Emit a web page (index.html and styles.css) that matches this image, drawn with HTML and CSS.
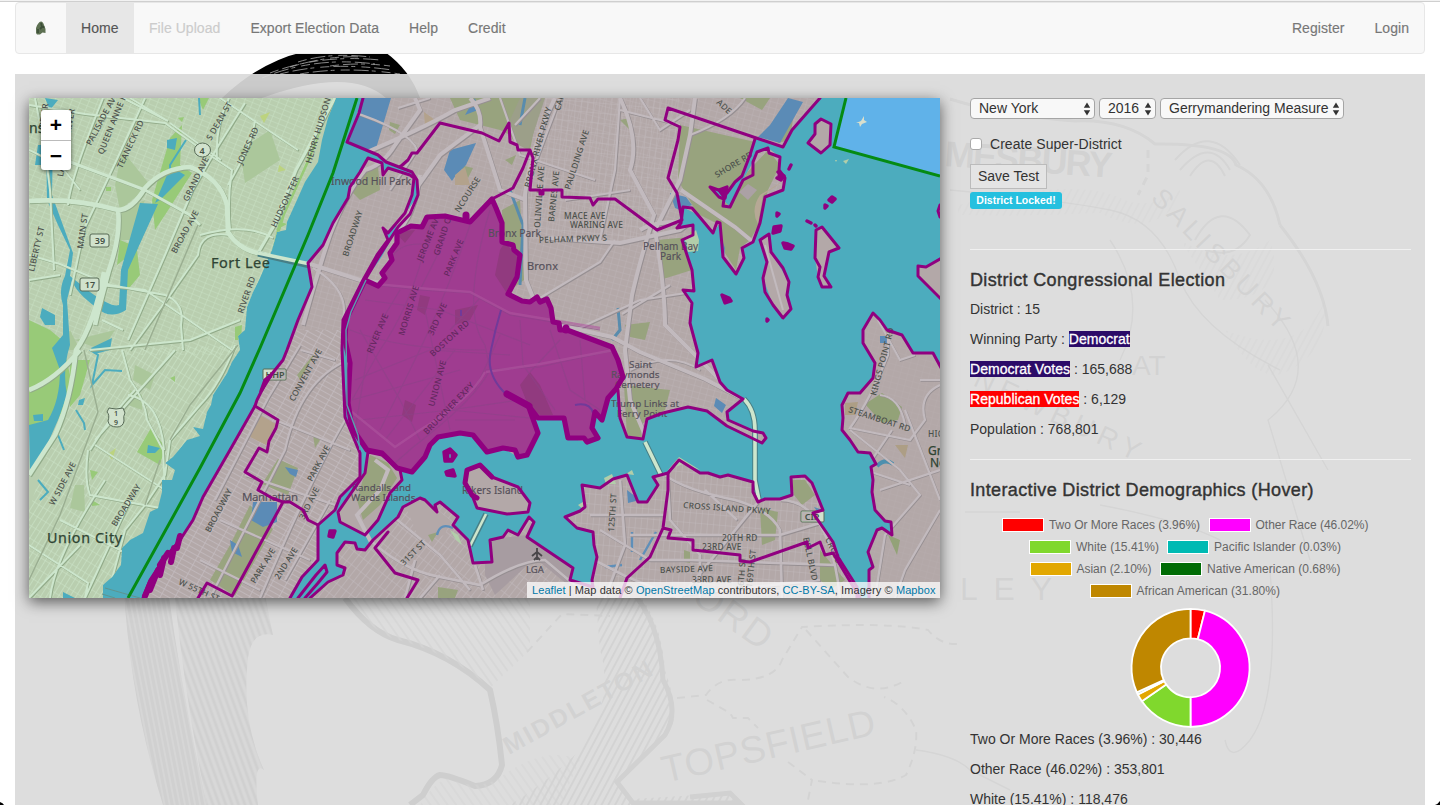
FILE: index.html
```html
<!DOCTYPE html>
<html lang="en">
<head>
<meta charset="utf-8">
<title>District Map</title>
<link rel="stylesheet" href="styles.css">
</head>
<body>
<svg class="backdrop" viewBox="0 0 1440 805" aria-hidden="true">
  <defs>
    <pattern id="hatchA" width="5" height="60" patternUnits="userSpaceOnUse" patternTransform="rotate(-11)"><rect width="5" height="60" fill="#444"/><path d="M3 0V60" stroke="#bbb" stroke-width="1.4"/></pattern>
    <pattern id="hatchB" width="6" height="60" patternUnits="userSpaceOnUse" patternTransform="rotate(-20)"><rect width="6" height="60" fill="#bbb"/><path d="M3 0V60" stroke="#444" stroke-width="2.8"/></pattern>
    <pattern id="hatchC" width="6" height="40" patternUnits="userSpaceOnUse" patternTransform="rotate(28)"><path d="M3 0V40" stroke="#777" stroke-width="2"/></pattern>
    <pattern id="hatchD" width="7" height="60" patternUnits="userSpaceOnUse" patternTransform="rotate(-35)"><path d="M3 0V60" stroke="#888" stroke-width="1.4"/></pattern>
  </defs>
  <path d="M222 98Q260 62 303 52H385Q410 70 420 98H386Q350 66 262 98Z" fill="#000"/>
  <path d="M262 78Q315 56 375 64M270 73Q320 54 380 60M280 74Q330 61 392 70M298 62Q330 52 370 57M300 74Q345 66 400 74M290 67Q330 55 360 57M330 66Q360 62 390 66" fill="none" stroke="#aaa" stroke-width=".8" stroke-dasharray="9 4 15 3 4 6"/>
  <path d="M124 590H168Q183 700 207 805H163Q130 700 124 590Z" fill="url(#hatchA)"/>
  <path d="M174 590H264L273 635Q252 630 248 658Q241 720 264 770Q253 760 258 805H207Q185 700 174 590Z" fill="url(#hatchB)"/>
  <path d="M345 598Q370 632 398 640Q450 653 490 690Q498 725 502 765Q497 785 475 786Q448 775 440 775Q432 777 423 795L410 805" fill="none" stroke="#333" stroke-width="6"/>
  <path d="M350 598Q370 632 398 640Q450 653 490 688L530 650V598Z" fill="url(#hatchD)"/>
  <path d="M423 800Q440 777 450 779Q480 792 502 776Q545 745 580 760L560 805H420Z" fill="url(#hatchD)" opacity=".8"/>
  <path d="M595 590H635Q662 620 665 670Q679 710 672 726Q650 755 617 778L632 799L730 793L740 805H510Q550 780 580 750Q615 700 600 650Z" fill="url(#hatchC)"/>
  <path d="M630 590Q660 620 663 680Q680 710 665 735L617 782L633 803H740L730 793L690 797" fill="none" stroke="#555" stroke-width="5"/>
  <g fill="none" stroke="#777" stroke-width="2" stroke-dasharray="8 6"><path d="M527 652L562 614L610 616M677 698L706 695Q718 678 738 680Q775 680 782 660L802 627Q890 622 928 630Q940 645 958 644M806 630L848 677Q875 698 904 681M707 700L730 713L733 718H748L758 728M788 762L812 780L807 805M818 781Q880 790 906 775Q918 750 916 730Q905 705 884 697"/></g>
  <g fill="none" stroke="#888" stroke-width="3"><path d="M950 99Q1000 115 1075 121Q1125 119 1155 144Q1230 143 1236 165Q1270 180 1280 225M1280 225Q1324 280 1328 326"/><path d="M950 190Q1060 200 1110 210Q1160 220 1180 280Q1200 330 1280 370M1110 240Q1150 300 1120 360M1268 365L1328 470M1265 300Q1330 370 1268 420L1310 560M1270 570Q1280 700 1250 740Q1230 765 1225 740M965 512H1020M1100 505Q1180 520 1220 540M970 770L1010 790M916 750Q955 755 970 770" stroke-width="1.4"/><path d="M1175 160Q1210 120 1240 165M1180 170Q1210 135 1230 170M1190 176Q1210 145 1225 176M1195 240Q1220 195 1250 235Q1235 260 1205 250" stroke-width="2"/><path d="M1148 150V175L1138 195" stroke-dasharray="8 6"/></g>
  <path d="M958 205Q1080 175 1125 200Q1150 210 1180 190V200Q1150 240 1100 213Q1030 217 958 215Z" fill="url(#hatchC)" opacity=".3"/>
  <path d="M1225 330Q1260 390 1290 370Q1330 350 1325 300Q1300 360 1225 330ZM1180 240Q1230 270 1270 240Q1290 300 1220 300Z" fill="url(#hatchC)" opacity=".35"/>
  <g class="engraving"><text x="509" y="755" font-size="25" font-weight="700" transform="rotate(-29 509 755)" textLength="166">MIDDLETON</text><text x="665" y="783" font-size="38" transform="rotate(-13 665 783)" textLength="218">TOPSFIELD</text><text x="690" y="600" font-size="38" transform="rotate(36 690 600)" textLength="88">ORD</text><text x="944" y="166" font-size="36" font-weight="700" transform="rotate(4 944 166)" textLength="168">MESBURY</text><text x="1150" y="199" font-size="27" transform="rotate(46 1150 199)" textLength="185">SALISBURY</text><text x="1132" y="375" font-size="28">AT</text><text x="972" y="385" font-size="28" transform="rotate(25 972 385)" textLength="180">NEWBURY</text><text x="960" y="600" font-size="32" textLength="92">LEY</text></g>
  <path d="M0 802Q3 803 4 805H0ZM1440 801Q1438 804 1435 805H1440Z"/>
</svg>
<div class="page">
  <nav class="navbar">
    <a class="brand"><svg width="14" height="16" viewBox="0 0 14 16"><path d="M7 1.500Q9 1.500 10 5L11.500 9V13L8.500 12.500L6 14.500H3L2 13V8Q4 2 7 1.500Z" fill="#5d7052"/><path d="M7 3L8 7L6 9M4 9V13M9.500 6V8" fill="none" stroke="#30412d" stroke-width="1.800" opacity=".7"/></svg></a>
    <a class="nav-item active">Home</a><a class="nav-item disabled">File Upload</a><a class="nav-item">Export Election Data</a><a class="nav-item">Help</a><a class="nav-item">Credit</a>
    <span class="spacer"></span>
    <a class="nav-item">Register</a><a class="nav-item">Login</a>
  </nav>
  <main class="panel">
    <section class="map">
      <svg class="map-canvas" viewBox="29 98 911 500">
        <defs>
          <pattern id="gw" width="8" height="5" patternUnits="userSpaceOnUse" patternTransform="rotate(22)"><path d="M0 0H8M0 0V5" stroke="#c8e0c3" stroke-width="1.1" fill="none"/></pattern>
          <pattern id="gw2" width="5" height="11" patternUnits="userSpaceOnUse" patternTransform="rotate(32)"><path d="M0 0H5M0 0V11" stroke="#cce4c8" stroke-width="1.2" fill="none"/></pattern>
          <pattern id="gm" width="13" height="5" patternUnits="userSpaceOnUse" patternTransform="rotate(29)"><path d="M0 0H13M0 0V5" stroke="#c3bbc0" stroke-width="1.5" fill="none"/></pattern>
          <pattern id="gb" width="7" height="6" patternUnits="userSpaceOnUse" patternTransform="rotate(15)"><path d="M0 0H7M0 0V6" stroke="#bdb4b7" stroke-width=".9" fill="none"/></pattern>
          <pattern id="gq" width="6" height="10" patternUnits="userSpaceOnUse" patternTransform="rotate(5)"><path d="M0 0H6M0 0V10" stroke="#bfb7ba" stroke-width="1" fill="none"/></pattern>
          <pattern id="gq2" width="6" height="12" patternUnits="userSpaceOnUse" patternTransform="rotate(38)"><path d="M0 0H6M0 0V12" stroke="#c1b9bd" stroke-width="1.2" fill="none"/></pattern>
          <path id="jersey" d="M29 98H336L328 118L322 140L318 162L305 182L297 200L287 222L286 230L277 232L272 250L260 278L253 292L247 307L245 330L238 336L240 350L232 362L227 373L213 395L211 405L207 412L203 429L193 427L200 436L187 440L173 457L165 463L175 470L172 480L162 480V492L158 508L150 512L143 533L130 540L122 548L121 565L112 577L103 585V598H29Z"/>
          <path id="manhattan" d="M368 158L360 172L350 187L348 198L333 223L323 245L308 263L312 287L298 320L287 350L283 360L267 380L263 388L257 400L255 406L230 450L203 497L193 520L180 540L163 560L150 580L143 598V605H290V598L302 577L318 560L318 525L335 510L340 497L360 477V453L345 417L342 350L343 320L363 280L377 255L388 240L383 228L388 233L405 213L412 195L414 178L410 175L388 168L383 175L382 163Z"/>
          <path id="bronx" d="M363 98L347 142L378 155L386 162L412 172L418 180L417 198L398 222L392 238L381 258L365 280L347 318L345 340L352 428L367 450L382 453L397 468L412 472L425 457L438 437L460 433L473 435L487 452L503 448L518 457L527 455L538 433L528 405L538 418L564 418L568 438L587 442L598 438L592 428L595 412L602 420L608 398L617 388L620 418L627 437L643 439L647 419L663 413L688 407L707 411L727 426L762 443L766 438L763 433L753 431L728 420L727 412L743 399L727 390L720 382L712 360L696 367L698 353L690 323L692 303L683 290L694 291L692 270L682 240L692 235L693 225L677 228L683 207L698 215L713 233L720 223L723 257L736 274L744 258L742 248L753 242L760 223L765 197L783 190L785 178L779 170L780 157L768 148L757 152L753 162L743 180L730 207L710 187L725 192L742 177L755 139L783 147L792 130L820 98Z"/>
          <path id="selected" d="M492 199L496 208L502 223L502 242L513 245L514 250L520 255L517 277L508 294L522 301L530 302L537 297L540 302L547 299L551 308L553 322L559 323L560 330L567 330L612 347L618 360L623 377L616 389L608 398L602 420L595 412L592 428L598 438L587 442L584 438L568 438L564 418H538L528 405L507 395L528 405L538 433L527 455L518 457L515 450L503 448L487 452L473 435L460 433L438 437L430 445L425 457L412 472L397 468L382 453L367 450L352 428L348 403L350 363L345 340L346 320L365 280L378 286L385 278L382 273L392 260L390 253L397 243V233L411 226L422 227L427 217L445 216L470 222Z"/>
          <path id="queens" d="M310 605V598L328 582L343 575L345 568L337 565V553L345 542L355 543L357 549L365 550L373 540L398 517L403 507L420 498L425 500L437 512L435 505L440 502L458 517L453 525L468 540L473 563L492 562L490 540L503 537L508 530L518 535L529 517L534 522L527 537L573 568L570 580L593 587L592 580L597 557L594 545L593 532L577 528L565 517L580 511L585 507L582 485L600 488L613 479L627 475L638 502H647L658 485L653 477L668 473L679 460L700 473L708 473L720 477L728 475L753 482V492L758 502L765 499H780L792 495L791 477L805 476L812 483L823 510L813 513L833 542L838 557L857 587V605Z"/>
          <path id="neck" d="M869 605V570L873 567L868 552L877 530L882 528L892 535L891 522L885 521L875 510L872 492L873 480L871 467L876 464L870 453L858 452L850 440L842 430L843 418L842 405L848 393L860 393L873 378L875 363L863 343V330L873 313L880 320L887 330L902 335L913 353L933 353L945 375V605Z"/>
          <path id="rikers" d="M467 470L480 465L492 477L518 487L530 503L528 512L507 514L477 508L472 495L465 483Z"/>
          <path id="randalls" d="M368 452L365 473L338 512L340 522L365 535L378 520L390 493L402 480L400 470L382 455Z"/>
          <clipPath id="cj"><use href="#jersey"/></clipPath><clipPath id="cm"><use href="#manhattan"/></clipPath><clipPath id="cb"><use href="#bronx"/></clipPath><clipPath id="cq"><use href="#queens"/></clipPath><clipPath id="cn"><use href="#neck"/></clipPath>
          <g id="jr">
            <path d="M29 201Q75 198 118 210Q132 210 145 188Q163 168 190 167Q220 178 227 205L228 232Q238 249 258 253L308 264M118 210Q121 235 109 270Q97 315 95 325M104 272Q94 325 76 350Q71 400 55 435L29 475M80 350Q55 380 29 390" stroke-width="4.6"/>
            <path d="M145 190L124 182L70 162M145 190L190 215L200 225M258 253L275 224L296 170L335 98" stroke-width="3"/>
            <path d="M29 105L85 114L165 123L205 152L232 170Q227 200 230 230M123 98L168 121L130 98M170 123L221 160M220 98L298 150M245 103Q218 145 193 189L165 255L128 340M145 98Q117 160 84 229L70 295M103 98Q70 180 68 205M35 98L45 150L50 190L54 270M200 235Q245 222 273 238M230 235Q200 230 198 255L170 295L130 350M29 255L60 264L110 285L165 295Q185 303 181 325L183 350M29 280L60 275M100 285L145 290L232 350M229 98Q215 125 217 160M255 120Q252 145 228 185M29 150L60 165L80 190M102 320L123 330M122 350L130 380Q145 400 147 420L163 450L165 490M90 450Q115 410 135 390M235 345Q220 385 200 405L170 440L165 475L145 505L125 530L107 598M95 445L165 490M128 395Q160 400 164 450M60 520L140 560M29 545L88 583L85 598M90 350L190 340L240 320M88 450Q84 480 90 495L160 508M95 440L175 350M50 598Q55 555 105 480M85 598L130 500M29 598L80 545" stroke-width="2"/>
          </g>
          <g id="er">
            <path d="M415 98L420 110L395 145Q383 165 365 170Q345 195 330 235Q315 280 303 325M310 264L360 280L420 288L470 293L535 320L612 337L640 352L705 379L743 399M555 98Q530 150 525 195L526 280L550 340M470 98Q482 110 480 127L500 190L526 200M420 175Q415 215 395 235M620 98Q640 140 630 170L654 215Q640 260 632 295L625 350L630 400L660 470M360 155Q420 130 455 110L490 98M480 125L440 155L415 190M548 238L620 243L680 230L693 220M695 98L690 135L680 180L655 230Q665 290 665 325L720 380M681 190L735 227L753 242M640 230Q655 220 693 222" stroke-width="4"/>
            <path d="M345 98L347 110Q410 130 417 150L390 190M540 98L515 125M500 98L520 155L595 180M565 200L630 190M670 285L622 314M560 98L525 190M640 98L660 130L690 110M690 135Q730 120 745 98M620 110L680 125M600 240L615 170L620 98M540 298L600 262L615 240M575 330L640 300L686 293M630 370Q670 350 700 370M348 360Q300 380 285 450L210 598M300 345L268 398L215 500M345 420Q310 480 260 598M330 500L285 580M275 420L350 450M245 475L335 505M220 520L310 560M200 560L260 590M301 350L335 360M313 268Q350 290 343 320M398 108L430 98" stroke-width="2.2"/>
            <path d="M365 535Q400 570 440 577L480 585Q520 560 545 560L590 598M395 518L440 555L470 590M415 560L405 598M594 560L627 577L680 598M665 475Q685 490 735 500Q770 510 780 530L782 598M668 480L670 520L700 555V598M705 490L737 520M758 502L680 598M780 500Q830 500 840 598M590 515L665 515M620 480L625 545L605 598M600 530L650 560L690 560L835 565M630 535H780L830 520M820 580L650 598M440 575L420 598M483 590L475 565" stroke-width="2.6"/>
            <path d="M940 385Q918 395 925 420L910 440L850 428Q870 400 888 355V325M880 395Q900 397 905 425M905 410L940 500M850 430L900 470L920 495L885 535L875 598M940 470L880 490M940 510L905 570L895 598M892 430L865 470L910 485M920 380L940 380M878 320L900 360L915 355" stroke-width="2.2"/>
          </g>
        </defs>
        <rect x="29" y="98" width="911" height="500" fill="#4cacbe"/>
        <use href="#jersey" fill="#b9ceaf"/>
        <g clip-path="url(#cj)">
          <path d="M29 98H335L240 350L230 355H29Z" fill="url(#gw)"/><path d="M80 350L250 345L100 598H29V510Z" fill="url(#gw2)"/>
          <g fill="#abc79b"><path d="M122 150L150 185L120 210L115 185ZM240 150L270 130L280 160L245 183ZM135 365L155 375L150 390L133 380ZM75 485H84L85 512L70 508ZM75 340L115 330L102 350ZM130 390L142 395V410L128 405ZM122 210L145 200L130 240H118ZM60 350H80L70 330Z"/></g>
          <g fill="#98ca78"><path d="M170 138L182 125L180 165L192 173L165 215L155 230L152 200ZM120 240L139 248L117 265ZM130 250H137L140 275L125 293ZM29 320L50 330L62 340L70 375L68 400L55 425H29ZM70 360H90L80 395L70 407ZM151 428L165 447L160 465L137 452ZM198 98H209L203 110ZM325 120L310 160L285 215L282 225L270 260L278 225ZM235 327L242 325L241 340H235ZM281 222L287 224L276 230ZM178 118L184 117L182 122ZM170 378L175 376V382ZM90 470L98 472L92 480ZM92 500L100 505L92 506ZM106 187H111V191H106Z"/></g>
          <g fill="#4cacbe"><path d="M140 203L158 204L128 270L126 310Q110 320 97 308Q75 292 72 280L67 300L70 345Q62 370 67 395L58 420L47 445L30 475L29 425L48 420Q60 400 60 370L52 348L63 335V305Q58 290 65 276L70 250L58 225L47 200L46 140H53L52 195L73 253L70 276L90 292Q112 308 119 305L121 270ZM167 175L178 171L185 175L160 200L155 203ZM38 145H47V165H35ZM42 308L55 315V325L45 325L40 317ZM45 98L58 100L50 110ZM167 140L177 138L175 150L167 148ZM148 445L160 448L155 453H147ZM91 348L112 338L110 350L95 354ZM33 415L43 414V421H34ZM79 400L85 398L83 405H78ZM63 592L75 598H63Z"/></g>
          <g fill="#bcd37f"><path d="M260 116L270 112L264 123ZM279 165L286 170L278 172ZM108 454L116 448L112 460Z"/></g>
          <g fill="none" stroke="#4cacbe" stroke-width="2"><path d="M186 140L170 165V172M199 98L200 115M90 350L98 355L92 385L105 370L122 371M76 410L84 423L85 430M38 480L48 492L40 500M58 435L64 450"/></g>
          <use href="#jr" fill="none" stroke="#91aa89" transform="translate(.9 .9)"/><use href="#jr" fill="none" stroke="#cde6cd"/>
          <path d="M84 350L98 412L60 515L29 580M238 345L190 405L170 440M160 460L145 505M198 225L145 350" fill="none" stroke="#9aae91" stroke-width="1.4"/>
        </g>
        <path d="M258 254L310 266" stroke="#477f86" stroke-width="5"/><path d="M258 253L310 264" stroke="#cde6cd" stroke-width="3.6"/>
        <path d="M105 588L140 598M102 594L115 598" stroke="#5f948f"/>
        <g fill="#b3a8a8"><use href="#manhattan"/><use href="#bronx"/><use href="#queens"/><use href="#neck"/><use href="#rikers"/><use href="#randalls"/></g>
        <path d="M815 134L817 124L821 119L831 124L830 145L821 153L808 143ZM760 240L769 234L771 252L789 282L787 295L791 309L783 318L773 305L763 278L767 262ZM816 230L822 227L839 248L829 252L824 276L831 287H822L818 277L815 258ZM940 259L926 267L918 266V276L940 298Z" fill="#b3a8a8"/>
        <path d="M765 245L783 310" stroke="#c2babe" stroke-width="2" fill="none"/>
        <g clip-path="url(#cm)">
          <rect x="130" y="330" width="240" height="270" fill="url(#gm)"/><path d="M300 150H420V330H280Z" fill="url(#gb)"/>
          <g fill="#99a47f"><path d="M278 459L298 468L288 495L262 484ZM250 505L273 529L235 596L210 580L230 545ZM358 172L378 166L380 190L360 200L352 192ZM313 435L320 440L315 448ZM326 98L350 110ZM317 350L300 380L297 375Z"/></g>
          <path d="M253 502H277V522L263 527L251 520ZM285 467L298 470L296 477L290 474ZM230 540L238 545L242 557L232 552Z" fill="#5b8bb6"/>
          <path d="M258 414L276 424L266 445L250 437Z" fill="#b3a28c"/>
        </g>
        <g clip-path="url(#cb)">
          <rect x="340" y="98" width="500" height="350" fill="url(#gb)"/><path d="M525 98H680V205L630 245L530 240Z" fill="url(#gq)"/>
          <g fill="#98a37e"><path d="M450 98H540L530 150L515 143L510 135L500 130L460 120ZM680 125L755 142L742 176L730 207L698 215L678 180ZM740 180L768 150L780 165L768 190L760 223L750 240L740 248L736 270L723 250L720 225L700 215ZM502 210L520 200L524 280L510 290L520 255L503 240ZM657 240L690 237L692 270L660 280ZM624 385L670 390L665 410L640 425L642 437H627ZM390 122L400 125L395 134L389 130ZM620 120L630 118V130ZM740 98H770L762 110ZM625 325L650 322L645 340L630 337ZM460 165L473 168L468 178ZM505 160L516 155L512 165ZM776 130L793 118L790 140L778 143Z"/></g>
          <path d="M520 98H545L528 150L515 143L510 120Z" fill="#9c9f89"/>
          <path d="M690 232L698 230V250L690 250Z" fill="#98ca78"/>
          <path d="M363 98L391 98L375 152L347 142ZM450 150L476 143L466 165L456 175L452 181L444 170ZM788 98L803 102L790 125L780 143L758 137L770 125ZM670 193L686 197L692 205L680 210L675 208ZM475 98L478 110L465 115ZM716 398L726 405L722 413L714 406ZM720 235L725 248L724 257L719 248Z" fill="#5b8bb6"/>
          <path d="M525 98L520 125M510 190L523 225L520 285M618 308L620 330L612 340" fill="none" stroke="#598cad" stroke-width="3"/>
          <path d="M748 184L757 190L748 200L739 192Z" fill="#aba1a5"/><path d="M785 180L760 195Q750 210 758 224L763 195Z" fill="#b6a895"/><path d="M455 175L465 167L470 185H455ZM424 112L435 120L425 128Z" fill="#b3a28c"/>
        </g>
        <g clip-path="url(#cq)">
          <path d="M290 480H560V598H300Z" fill="url(#gq2)"/><rect x="560" y="450" width="300" height="150" fill="url(#gq)"/>
          <path d="M485 540L527 535L575 570L568 585L535 558L495 595L485 575Z" fill="#a79ca1"/><path d="M405 505L425 500L450 520L445 535L420 540Z" fill="#b3a8a8"/>
          <path d="M760 508L778 512L775 540L762 545ZM792 480H805L815 495L802 505L794 495ZM438 587L458 590L455 598H438ZM684 550L690 552V563L684 562ZM820 550L845 580L830 590L820 580ZM428 535L438 532L432 542Z" fill="#98a37e"/>
          <path d="M627 490L640 500L628 503ZM814 507L823 510L819 514Z" fill="#5b8bb6"/>
          <path d="M437 535Q440 522 453 528M632 532V552M656 532L640 560M605 567L622 565" fill="none" stroke="#5f8fb9" stroke-width="2.4"/>
        </g>
        <g clip-path="url(#cn)"><rect x="840" y="310" width="100" height="290" fill="url(#gb)" opacity=".4"/><path d="M865 404L882 393L902 407L898 420L882 423ZM888 535L900 540L897 555Z" fill="#93a278"/><path d="M845 403L858 402L855 415H845ZM895 445L908 445L905 458Z" fill="#ad9e85"/><path d="M880 336H887V343H880Z" fill="#5b8bb6"/><path d="M877 466Q885 458 893 464" fill="none" stroke="#4c8fae" stroke-width="4"/></g>
        <path d="M370 455L388 463L397 478L380 505L363 520L357 500Z" fill="#98a37e"/>
        <g clip-path="url(#cb)"><use href="#er" fill="none" stroke="#968f92" transform="translate(.9 .9)"/><use href="#er" fill="none" stroke="#c2babe"/></g>
        <g clip-path="url(#cm)"><use href="#er" fill="none" stroke="#968f92" transform="translate(.9 .9)"/><use href="#er" fill="none" stroke="#c2babe"/></g><g clip-path="url(#cq)"><use href="#er" fill="none" stroke="#968f92" transform="translate(.9 .9)"/><use href="#er" fill="none" stroke="#c2babe"/></g><g clip-path="url(#cn)"><use href="#er" fill="none" stroke="#968f92" transform="translate(.7 .7)"/><use href="#er" fill="none" stroke="#c2babe"/></g>
        <g fill="none"><path d="M375 460L388 470L380 490L357 515L372 544" stroke="#c2babe" stroke-width="4"/><path d="M645 442L661 475M744 399Q755 410 755 430V480L759 500M486 514L470 546" stroke="#477f86" stroke-width="5.6"/><path d="M645 442L661 475M744 399Q755 410 755 430V480L759 500" stroke="#cde6cd" stroke-width="3.6"/><path d="M486 514L470 546" stroke="#cde6cd" stroke-width="2.6"/></g>
        <path d="M846 98H940V176L834 147Z" fill="#60b2e9"/><path d="M864 116V120L867 122L862 124L860 127L859 123L856 123L861 121Z" fill="#d9dfcc"/>
        <path d="M843 161L849 159L846 164ZM835 160L837 160L836 162ZM696 230L699 240L698 251L688 252L685 240ZM450 530L458 535L462 545L456 540ZM604 478L612 474L616 484L606 484ZM626 474L632 470L634 475ZM668 470L679 457L700 470L683 464ZM578 505L586 500L584 510Z" fill="#b2ceaa"/>
        <use href="#selected" fill="#9f3c90"/>
        <g fill="#913a7f"><path d="M505 242L518 258L514 278L506 292L495 275L500 250ZM520 385L530 372L540 385L553 415H540L528 405ZM405 400L416 405L412 422L402 415ZM455 310L478 305L470 320L455 325ZM395 232L415 230L405 243ZM420 295L430 297L425 315L417 310Z"/></g>
        <g fill="none" stroke="#8c4389" stroke-width="1.200" opacity=".6"><path d="M375 285L420 290L470 293L510 315L600 330M365 300L440 310L530 345M430 225Q415 300 380 350L352 400M470 225Q445 300 410 370L380 430M490 210Q460 310 485 345L490 370Q475 400 412 448L395 463M350 330Q400 350 485 350M355 380L430 350L510 355M352 400L460 370M360 420L450 410L520 400M485 370L540 367L615 350M520 320L523 365L555 410M425 310L450 430M455 420H515M450 410L530 418M390 260Q400 240 430 245M400 290L370 340L355 430M550 330L570 390L600 410M480 298L450 330M440 250L420 290M500 335L475 390M455 350L385 440M360 330L400 400L420 440M560 340L530 372M580 340L585 400"/></g>
        <path d="M375 284L430 289L470 292L510 313L600 328M486 372L540 364L614 350M352 412L395 447L420 430Q470 400 485 372" fill="none" stroke="#ad559f" stroke-width="2.4" opacity=".6"/>
        <path d="M501 310Q495 330 491 350Q485 375 507 395M575 405Q590 402 593 413M461 310V316" fill="none" stroke="#713a99" stroke-width="2"/>
        <g class="streets soft">
          <text x="422" y="262" transform="rotate(-68 422 262)">JEROME AV</text><text x="439" y="256" transform="rotate(-72 439 256)">GRAND C</text><text x="449" y="277" transform="rotate(-68 449 277)">PARK AVE</text><text x="404" y="336" transform="rotate(-73 404 336)">MORRIS AVE</text><text x="433" y="336" transform="rotate(-66 433 336)">3RD AVE</text><text x="433" y="357" transform="rotate(-42 433 357)">BOSTON RD</text><text x="372" y="354" transform="rotate(-67 372 354)">RIVER AVE</text><text x="434" y="407" transform="rotate(-75 434 407)">UNION AVE</text><text x="427" y="435" transform="rotate(-46 427 435)">BRUCKNER EXPY</text>
        </g>
        <g class="streets">
          <text x="45" y="128" transform="rotate(-82 45 128)">RIVER</text><text x="63" y="177" transform="rotate(-80 63 177)">LAKEVIEW RIVER</text><text x="91" y="146" transform="rotate(-62 91 146)">PALISADE AVE</text><text x="103" y="155" transform="rotate(-68 103 155)">QUEEN ANNE RD</text><text x="122" y="169" transform="rotate(-65 122 169)">TEANECK RD</text><text x="83" y="249" transform="rotate(-82 83 249)">MAIN ST</text><text x="34" y="272" transform="rotate(-77 34 272)">LIBERTY ST</text><text x="211" y="141" transform="rotate(-60 211 141)">S DEAN ST</text><text x="242" y="165" transform="rotate(-65 242 165)">JONES RD</text><text x="188" y="202" transform="rotate(-64 188 202)">GRAND AVE</text><text x="176" y="254" transform="rotate(-61 176 254)">BROAD AVE</text><text x="276" y="228" transform="rotate(-65 276 228)">HUDSON TER</text><text x="311" y="164" transform="rotate(-73 311 164)">HENRY HUDSON</text><text x="243" y="314" transform="rotate(-71 243 314)">RIVER RD</text><text x="54" y="506" transform="rotate(-62 54 506)">W SIDE AVE</text><text x="116" y="527" transform="rotate(-58 116 527)">BROADWAY</text><text x="210" y="533" transform="rotate(-62 210 533)">BROADWAY</text><text x="348" y="257" transform="rotate(-72 348 257)">BROADWAY</text><text x="294" y="402" transform="rotate(-61 294 402)">CONVENT AVE</text><text x="255" y="584" transform="rotate(-58 255 584)">PARK AVE</text><text x="279" y="580" transform="rotate(-58 279 580)">2ND AVE</text><text x="312" y="482" transform="rotate(-62 312 482)">PARK AVE</text><text x="304" y="520" transform="rotate(-63 304 520)">3RD AVE</text><text x="178" y="584" transform="rotate(24 178 584)">W 55TH ST</text><text x="404" y="566" transform="rotate(-45 404 566)">31ST ST</text><text x="530" y="188" transform="rotate(-75 530 188)">BRONX RIVER PKWY</text><text x="540" y="228" transform="rotate(-86 540 228)">OLINVILLE AVE</text><text x="554" y="222" transform="rotate(-84 554 222)">BARNES AVE</text><text x="570" y="190" transform="rotate(-72 570 190)">PAULDING AVE</text><text x="560" y="111" transform="rotate(-75 560 111)">CAR</text><text x="459" y="213" transform="rotate(-57 459 213)">NCOURSE</text><text x="564" y="219">MACE AVE</text><text x="570" y="228">WARING AVE</text><text x="539" y="243" transform="rotate(-2 539 243)">PELHAM PKWY S</text><text x="717" y="178" transform="rotate(-31 717 178)">SHORE RD</text><text x="716" y="103" transform="rotate(43 716 103)">ADE</text><text x="876" y="396" transform="rotate(-75 876 396)">KINGS POINT RD</text><text x="848" y="412" transform="rotate(18 848 412)">STEAMBOAT RD</text><text x="928" y="437">HIGH</text><text x="683" y="508" transform="rotate(4 683 508)">CROSS ISLAND PKWY</text><text x="722" y="541">20TH RD</text><text x="702" y="550">23RD AVE</text><text x="660" y="573" transform="rotate(-2 660 573)">BAYSIDE AVE</text><text x="692" y="583">33RD AVE</text><text x="614" y="532" transform="rotate(-86 614 532)">125TH ST</text><text x="743" y="596" transform="rotate(-86 743 596)">166TH ST</text><text x="752" y="588" transform="rotate(-84 752 588)">169TH ST</text><text x="803" y="538" transform="rotate(78 803 538)">BELL BLVD</text><text x="825" y="539" transform="rotate(65 825 539)">CROSS</text>
        </g>
        <g class="places"><text x="29" y="133" font-size="14">ns</text><text x="211" y="268" font-size="14.5" textLength="59">Fort Lee</text><text x="47" y="543" font-size="14.3" textLength="75">Union City</text><g class="muted"><text x="331" y="185" font-size="10.5" textLength="80">Inwood Hill Park</text><text x="488" y="237" font-size="10.3" textLength="53">Bronx Park</text><text x="527" y="270" font-size="11" textLength="31">Bronx</text><text x="242" y="501" font-size="11.5" textLength="56">Manhattan</text><text x="643" y="250" font-size="10">Pelham Bay</text><text x="660" y="260" font-size="10">Park</text><text x="629" y="368" font-size="9.8">Saint</text><text x="611" y="378" font-size="9.8">Raymonds</text><text x="615" y="388" font-size="9.8">Cemetery</text><text x="611" y="407" font-size="9.8">Trump Links at</text><text x="617" y="417" font-size="9.8">Ferry Point</text><text x="352" y="491" font-size="9.800">Randalls and</text><text x="351" y="501" font-size="9.800">Wards Islands</text><text x="462" y="494" font-size="10" textLength="61">Rikers Island</text><text x="526" y="573" font-size="9.5">LGA</text></g><text x="928" y="455" font-size="12">Great</text><text x="930" y="467" font-size="12">Neck</text></g>
        <path d="M537 548V560M532 556L537 552L542 556M534 560L537 557L540 560" stroke="#494549" stroke-width="1.8" fill="none"/>
        <g class="shield"><ellipse cx="202.500" cy="150" rx="8" ry="7"/><rect x="90" y="234" width="19" height="13" rx="2"/><rect x="80" y="278" width="19" height="13" rx="2"/><path d="M109 408Q116 410 123 408L125 413Q123 416 124 421Q123 427 117 427Q109 427 108 421Q110 415 107 412Z"/><rect x="263" y="369" width="23" height="11" rx="1"/><rect x="801" y="511" width="23" height="11" rx="1"/></g><path d="M273 370H285V379H268ZM802 512H815L819 521H802Z" fill="#b9b3b3"/>
        <g class="shield-label"><text x="202" y="153.500">4</text><text x="100" y="244">39</text><text x="90" y="288">17</text><text x="116" y="416" class="tiny">1</text><text x="116" y="424.500" class="tiny">9</text><text x="275" y="378">HHP</text><text x="812" y="520">CIP</text></g>
        <path d="M357 98L333 173L308 235L260 348L240 393L200 468L128 598M846 98L834 147L940 176" fill="none" stroke="#058b13" stroke-width="3"/>
        <g class="border">
          <use href="#manhattan"/><use href="#queens"/><use href="#neck"/><use href="#rikers"/><path d="M477 498L472 495L465 483L467 470L480 465L492 477" stroke-width="5"/><use href="#randalls"/>
          <path d="M363 98L359 113L347 142L378 155L386 162L412 172L417 180L418 195L410 214L398 227L378 258L365 280M400 167L408 160L412 153L417 153L440 123L482 133L499 141L509 123L510 142L517 145L518 150H530L523 168L513 188L492 199M530 150L533 158L530 190H540V194H543V190H562V197L590 198L593 205L598 199H615L657 230L682 220L677 193L668 178L678 140L680 127L665 120L668 108L783 147L792 130L820 98M755 139L750 155L742 176L735 182L727 193L710 187L719 197L724 199L723 206L730 207L743 180L753 175L753 162L757 152L768 148L769 153L780 157L779 170L785 178L783 190L765 197L760 223L753 242L742 248L744 258L736 274L723 257L720 223L717 222L713 233L698 215L692 208L683 207L681 223L677 228L693 225V235L682 240L692 270L694 291L683 290L692 303L690 323L698 353L696 367L712 360L720 382L727 390L743 399L727 412L728 420L753 431L763 433L766 438L762 443L727 426L707 411L688 407L663 413L647 419L643 439L627 437L620 418L618 390"/>
          <path d="M255 406L278 420L276 428L269 441L267 452L259 448L245 472L262 482L258 490L272 498L283 502H290L303 510L308 520L318 525M283 502L232 596L207 583L198 598M388 532L375 548L395 573L418 580L407 598M668 473L668 490L663 528L650 557L627 578L620 598M663 528L671 530L668 538L693 540V550L740 555V561L750 562L807 542L808 548L820 542L825 555L833 553L860 598"/>
          <path d="M815 124L821 119L831 124L830 145L821 153L808 143L815 134ZM760 240L769 234L771 252L783 268L789 282L787 295L791 309L783 318L773 305L765 292L763 278L767 262ZM816 230L822 227L839 248L829 252L824 276L831 287H822L818 277L820 267L815 258ZM945 256L926 267L918 266V276L945 303M940 205L938 211L940 217M298 598L316 575L325 565L327 572L318 583L305 598"/>
          <path d="M832 197L835 199L832 202L829 200ZM825 205L827 206L825 208ZM777 213L779 214L777 216ZM774 227L781 226L780 231L773 233ZM783 243L788 244L793 246L791 249L785 248ZM722 295L729 298L731 301L725 303ZM767 319L768 320L767 321ZM807 221L811 223M815 225L816 226M791 165L789 169M778 172L784 176L781 180L777 178M330 531L335 531L333 537L329 536ZM719 190L727 187L725 198ZM265 380L261 391L271 375ZM444 452L450 449L456 455L452 461L445 461ZM446 472L453 470L455 476L447 475Z" fill="#900080" stroke-width="3.4"/>
          <path d="M450 455V457" stroke="#5f80a5" stroke-width="2"/>
          <use href="#selected" stroke-width="5.2"/>
          <path d="M507 394L529 406M466 219V215M566 328V330" stroke-width="7"/>
          <path d="M180 536L177 548M174 548L171 562M164 558L160 575M158 570L150 590M151 582L145 596M168 553L160 565"  stroke-width="6"/>
        </g>
        <path d="M366 280L351 312L346 330L347 405L358 435L360 450" fill="none" stroke="#5aa0ad" stroke-width="1.4"/>
      </svg>
      <div class="zoom"><a>+</a><a>−</a></div>
      <div class="credit"><a>Leaflet</a> | Map data © <a>OpenStreetMap</a> contributors, <a>CC-BY-SA</a>, Imagery © <a>Mapbox</a></div>
    </section>
    <aside class="side">
      <div class="selects">
        <div class="select state">New York<svg viewBox="0 0 8 14"><path d="M4 0.500L7.200 5.700H.8ZM4 13.500L7.200 8.300H.8Z"/></svg></div>
        <div class="select year">2016<svg viewBox="0 0 8 14"><path d="M4 0.500L7.200 5.700H.8ZM4 13.500L7.200 8.300H.8Z"/></svg></div>
        <div class="select measure">Gerrymandering Measure<svg viewBox="0 0 8 14"><path d="M4 0.500L7.200 5.700H.8ZM4 13.500L7.200 8.300H.8Z"/></svg></div>
      </div>
      <div class="check"><span class="box"></span>Create Super-District</div>
      <div class="save">Save Test</div>
      <div class="locked">District Locked!</div>
      <hr>
      <h4>District Congressional Election</h4>
      <p>District : 15</p>
      <p>Winning Party : <b class="dem">Democrat</b></p>
      <p><b class="dem">Democrat Votes</b> : 165,688</p>
      <p><b class="rep">Republican Votes</b> : 6,129</p>
      <p>Population : 768,801</p>
      <hr>
      <h4>Interactive District Demographics (Hover)</h4>
      <svg class="chart" viewBox="970 509 441 220">
        <g stroke="#fff" stroke-width="1"><rect x="1002.500" y="518.500" width="41" height="13" fill="#f00"/><rect x="1209.500" y="518.500" width="41" height="13" fill="#f0f"/><rect x="1029.500" y="540.500" width="41" height="13" fill="#80d82d"/><rect x="1167.500" y="540.500" width="41" height="13" fill="#00bab3"/><rect x="1030.500" y="562.500" width="41" height="13" fill="#e2a700"/><rect x="1160.500" y="562.500" width="41" height="13" fill="#006c05"/><rect x="1090.500" y="584.500" width="41" height="13" fill="#bf8700"/></g>
        <g class="legend"><text x="1049" y="529" textLength="151">Two Or More Races (3.96%)</text><text x="1255.500" y="529" textLength="113">Other Race (46.02%)</text><text x="1076" y="551" textLength="83">White (15.41%)</text><text x="1214" y="551" textLength="127">Pacific Islander (0.03%)</text><text x="1076.500" y="573" textLength="75">Asian (2.10%)</text><text x="1207" y="573" textLength="133.500">Native American (0.68%)</text><text x="1136.500" y="595" textLength="143.500">African American (31.80%)</text></g>
        <g stroke="#fff" stroke-width="1.8" transform="translate(1190.500 667.800)"><path d="M0 -59A59 59 0 0 1 14.500 -57.200L7.300 -28.600A29.500 29.500 0 0 0 0 -29.500Z" fill="#f00"/><path d="M14.500 -57.200A59 59 0 0 1 .1 59L0 29.500A29.500 29.500 0 0 0 7.300 -28.600Z" fill="#f0f"/><path d="M0 59A59 59 0 0 1 -48.600 33.500L-24.300 16.700A29.500 29.500 0 0 0 0 29.500Z" fill="#80d82d"/><path d="M-48.600 33.500A59 59 0 0 1 -52.600 26.700L-26.300 13.300A29.500 29.500 0 0 0 -24.300 16.700Z" fill="#e2a700"/><path d="M-52.600 26.700L-53.700 24.400L-26.900 12.200L-26.300 13.300Z" fill="#bfe0c0"/><path d="M-53.700 24.400A59 59 0 0 1 0 -59V-29.500A29.500 29.500 0 0 0 -26.900 12.200Z" fill="#bf8700"/></g>
      </svg>
      <p>Two Or More Races (3.96%) : 30,446</p>
      <p>Other Race (46.02%) : 353,801</p>
      <p>White (15.41%) : 118,476</p>
    </aside>
  </main>
</div>
</body>
</html>
```
FILE: styles.css
```css
* { box-sizing: border-box; }
html, body { height: 100%; }
body { margin: 0; overflow: hidden; background: #fff; color: #333; font: 14px/20px "Liberation Sans", Arial, sans-serif; }
.backdrop { position: absolute; inset: 0; width: 1440px; height: 805px; z-index: 0; }
.engraving text { font-family: "Liberation Sans", Arial, sans-serif; fill: #666; }
.page { position: relative; z-index: 1; height: 805px; overflow: hidden; border-top: 1px solid #f2f2f2; padding: 1px 15px 0; box-shadow: inset 0 1px #cfcfcf; }
.navbar { display: flex; height: 52px; margin-bottom: 20px; background: #f8f8f8; border: 1px solid #e7e7e7; border-radius: 4px; }
.brand { width: 50px; display: flex; align-items: center; justify-content: center; }
.nav-item { padding: 15px; color: #777; letter-spacing: .05px; -webkit-text-stroke: .15px; }
.nav-item.active { background: #e7e7e7; color: #555; width: 68px; }
.nav-item.disabled { color: #ccc; }
.spacer { flex: 1; }
.panel { display: flex; gap: 30px; height: 760px; padding: 24px 14px 0; background: rgba(218, 218, 218, .93); }
.map { position: relative; flex: none; width: 911px; height: 500px; box-shadow: 0 4px 14px rgba(0, 0, 0, .6); }
.map-canvas { display: block; width: 911px; height: 500px; }
.streets text { font: 500 8.4px "Noto Sans", sans-serif; fill: #4c514c; letter-spacing: .2px; }
.streets.soft text { fill: #64285f; }
.places text { font-family: "Noto Sans", sans-serif; fill: #2f4433; stroke: #2f4433; stroke-width: .25px; }
.places .muted text { fill: #55505a; stroke: #55505a; stroke-width: .15px; }
.shield { fill: #d1e2cd; stroke: #586b57; stroke-width: 1; }
.shield-label text { font-family: "Noto Sans", sans-serif; font-size: 9px; font-weight: 600; text-anchor: middle; fill: #435044; }
.shield-label text.tiny { font-size: 7px; }
.border { fill: none; stroke: #900080; stroke-width: 3; stroke-linejoin: round; stroke-linecap: round; }
.zoom { position: absolute; left: 12px; top: 12px; width: 30px; border-radius: 3px; background: #fff; box-shadow: 0 1px 4px rgba(0, 0, 0, .6); }
.zoom a { display: block; height: 30px; text-align: center; font: bold 21px/30px "Liberation Sans", sans-serif; color: #000; }
.zoom a + a { border-top: 1px solid #bbb; }
.credit { position: absolute; right: 0; bottom: 0; width: 413px; height: 16px; padding: 0 5px; background: rgba(255, 255, 255, .75); font-size: 11px; line-height: 16px; letter-spacing: .085px; white-space: nowrap; }
.credit a { color: #0078a8; }
.side { flex: none; width: 441px; }
.selects { display: flex; gap: 4px; height: 21px; }
.select { position: relative; height: 21px; padding-left: 8px; border: 1px solid #a5a5a5; border-radius: 4px; background: #f8f8f8; line-height: 19px; white-space: nowrap; }
.select svg { position: absolute; right: 3px; top: 3px; width: 8px; height: 14px; fill: #333; }
.state { width: 125px; }
.year { width: 57px; }
.measure { width: 184px; }
.check { display: flex; align-items: center; gap: 8px; height: 20px; margin-top: 15px; letter-spacing: .05px; }
.box { width: 12px; height: 12px; border: 1px solid #aaa; border-radius: 3px; background: #fff; }
.save { width: 77px; height: 25px; margin-top: 10px; border: 1px solid #bbb; background: #e4e4e4; text-align: center; line-height: 23px; }
.locked { width: 92px; height: 17px; margin-top: 3px; border-radius: 3px; background: #25c0df; color: #fff; font-size: 10.5px; font-weight: 700; line-height: 17px; text-align: center; }
hr { height: 1px; margin: 40px 0 20px; border: 0; background: #f0f0f0; }
h4 { margin: 0 0 9px; font-size: 18px; font-weight: 400; line-height: 20px; letter-spacing: .36px; -webkit-text-stroke: .4px #333; white-space: nowrap; }
p { margin: 0 0 10px; }
p + hr { margin-top: 20px; }
b { color: #fff; font-weight: 400; letter-spacing: .03px; -webkit-text-stroke: .3px #fff; }
.dem { background: #2b0b68; }
.rep { background: #f00; }
.chart { display: block; width: 441px; height: 220px; }
.legend text { font: 12px "Liberation Sans", Arial, sans-serif; fill: #666; }
```
